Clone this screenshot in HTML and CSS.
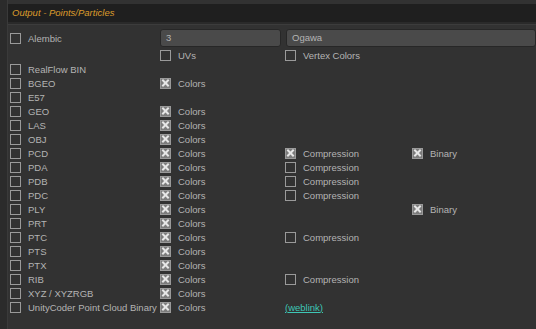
FILE: index.html
```html
<!DOCTYPE html>
<html lang="en">
<head>
    <meta charset="UTF-8">
    <title>Output - Points/Particles</title>
    <link rel="stylesheet" href="styles.css">
</head>
<body>
    <div class="panel">
        <div class="header">Output - Points/Particles</div>
        <div class="grid">
            <div class="cell"><span class="cb"></span>Alembic</div>
            <div class="cell"><div class="field short">3</div></div>
            <div class="cell span2"><div class="field long">Ogawa</div></div>

            <div class="cell"></div>
            <div class="cell"><span class="cb"></span>UVs</div>
            <div class="cell"><span class="cb"></span>Vertex Colors</div>
            <div class="cell"></div>

            <div class="cell"><span class="cb"></span>RealFlow BIN</div>
            <div class="cell"></div><div class="cell"></div><div class="cell"></div>

            <div class="cell"><span class="cb"></span>BGEO</div>
            <div class="cell"><span class="cb on"></span>Colors</div>
            <div class="cell"></div><div class="cell"></div>

            <div class="cell"><span class="cb"></span>E57</div>
            <div class="cell"></div><div class="cell"></div><div class="cell"></div>

            <div class="cell"><span class="cb"></span>GEO</div>
            <div class="cell"><span class="cb on"></span>Colors</div>
            <div class="cell"></div><div class="cell"></div>

            <div class="cell"><span class="cb"></span>LAS</div>
            <div class="cell"><span class="cb on"></span>Colors</div>
            <div class="cell"></div><div class="cell"></div>

            <div class="cell"><span class="cb"></span>OBJ</div>
            <div class="cell"><span class="cb on"></span>Colors</div>
            <div class="cell"></div><div class="cell"></div>

            <div class="cell"><span class="cb"></span>PCD</div>
            <div class="cell"><span class="cb on"></span>Colors</div>
            <div class="cell"><span class="cb on"></span>Compression</div>
            <div class="cell"><span class="cb on"></span>Binary</div>

            <div class="cell"><span class="cb"></span>PDA</div>
            <div class="cell"><span class="cb on"></span>Colors</div>
            <div class="cell"><span class="cb"></span>Compression</div>
            <div class="cell"></div>

            <div class="cell"><span class="cb"></span>PDB</div>
            <div class="cell"><span class="cb on"></span>Colors</div>
            <div class="cell"><span class="cb"></span>Compression</div>
            <div class="cell"></div>

            <div class="cell"><span class="cb"></span>PDC</div>
            <div class="cell"><span class="cb on"></span>Colors</div>
            <div class="cell"><span class="cb"></span>Compression</div>
            <div class="cell"></div>

            <div class="cell"><span class="cb"></span>PLY</div>
            <div class="cell"><span class="cb on"></span>Colors</div>
            <div class="cell"></div>
            <div class="cell"><span class="cb on"></span>Binary</div>

            <div class="cell"><span class="cb"></span>PRT</div>
            <div class="cell"><span class="cb on"></span>Colors</div>
            <div class="cell"></div><div class="cell"></div>

            <div class="cell"><span class="cb"></span>PTC</div>
            <div class="cell"><span class="cb on"></span>Colors</div>
            <div class="cell"><span class="cb"></span>Compression</div>
            <div class="cell"></div>

            <div class="cell"><span class="cb"></span>PTS</div>
            <div class="cell"><span class="cb on"></span>Colors</div>
            <div class="cell"></div><div class="cell"></div>

            <div class="cell"><span class="cb"></span>PTX</div>
            <div class="cell"><span class="cb on"></span>Colors</div>
            <div class="cell"></div><div class="cell"></div>

            <div class="cell"><span class="cb"></span>RIB</div>
            <div class="cell"><span class="cb on"></span>Colors</div>
            <div class="cell"><span class="cb"></span>Compression</div>
            <div class="cell"></div>

            <div class="cell"><span class="cb"></span>XYZ / XYZRGB</div>
            <div class="cell"><span class="cb on"></span>Colors</div>
            <div class="cell"></div><div class="cell"></div>

            <div class="cell"><span class="cb"></span>UnityCoder Point Cloud Binary</div>
            <div class="cell"><span class="cb on"></span>Colors</div>
            <div class="cell"><a class="link" href="#">(weblink)</a></div>
            <div class="cell"></div>
        </div>
    </div>
</body>
</html>
```

FILE: styles.css
```css
/* General Styles */
body {
    margin: 0;
    background-color: #2b2b2b;
    color: #b4b4b4;
    font-family: "Liberation Sans", Arial, sans-serif;
    font-size: 9.5px;
    height: 329px;
    overflow: hidden;
}

.panel {
    margin-left: 7px;
    padding-top: 4px;
    height: 325px;
    border-left: 1px solid #3a3a3a;
    background-color: #323232;
}

.header {
    height: 18px;
    line-height: 17px;
    padding-left: 4px;
    background-color: #1f1f1f;
    color: #dc9c2c;
    font-style: italic;
    border-bottom: 2px solid #2a2a2a;
    box-shadow: 0 1px 0 #3c3c3c;
}

.grid {
    display: grid;
    grid-template-columns: 150px 125px 127px 1fr;
    grid-auto-rows: 14px;
    grid-template-rows: 20px;
    padding: 4px 0 0 2px;
}

.cell {
    display: flex;
    align-items: center;
    gap: 7px;
    white-space: nowrap;
}

.span2 {
    grid-column: span 2;
}

/* Checkboxes */
.cb {
    position: relative;
    flex: none;
    width: 9px;
    height: 9px;
    border: 1px solid #9a9a9a;
}

.cb.on {
    background-color: #7c7c7c;
}

.cb.on::before,
.cb.on::after {
    content: "";
    position: absolute;
    left: 0;
    top: 3.5px;
    width: 9px;
    height: 2px;
    background-color: #e6e6e6;
    transform: rotate(45deg);
}

.cb.on::after {
    transform: rotate(-45deg);
}

/* Text fields */
.field {
    height: 18px;
    line-height: 16px;
    padding-left: 5px;
    border: 1px solid #272727;
    border-radius: 3px;
    background-color: #4a4a4a;
    box-sizing: border-box;
    color: #b4b4b4;
}

.field.short {
    width: 121px;
}

.field.long {
    width: 250px;
    margin-left: 1px;
}

.link {
    color: #3ec6b6;
    text-decoration: underline;
}
```
